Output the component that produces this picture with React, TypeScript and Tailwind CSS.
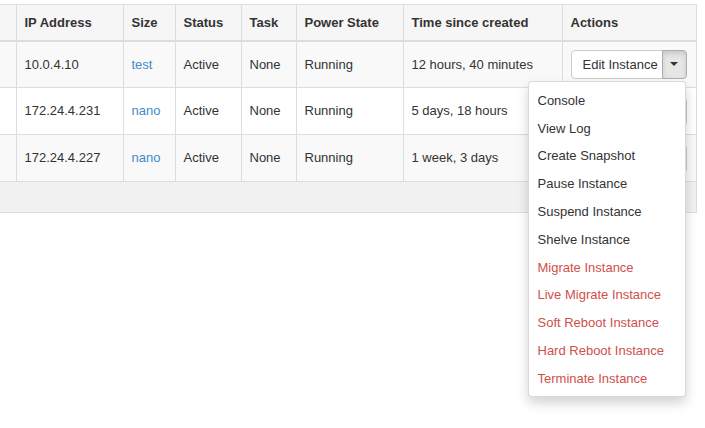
import React from 'react';

type Instance = {
  ip: string;
  size: string;
  status: string;
  task: string;
  power: string;
  age: string;
};

const instances: Instance[] = [
  { ip: '10.0.4.10', size: 'test', status: 'Active', task: 'None', power: 'Running', age: '12 hours, 40 minutes' },
  { ip: '172.24.4.231', size: 'nano', status: 'Active', task: 'None', power: 'Running', age: '5 days, 18 hours' },
  { ip: '172.24.4.227', size: 'nano', status: 'Active', task: 'None', power: 'Running', age: '1 week, 3 days' },
];

const menuItems: { label: string; danger?: boolean }[] = [
  { label: 'Console' },
  { label: 'View Log' },
  { label: 'Create Snapshot' },
  { label: 'Pause Instance' },
  { label: 'Suspend Instance' },
  { label: 'Shelve Instance' },
  { label: 'Migrate Instance', danger: true },
  { label: 'Live Migrate Instance', danger: true },
  { label: 'Soft Reboot Instance', danger: true },
  { label: 'Hard Reboot Instance', danger: true },
  { label: 'Terminate Instance', danger: true },
];

const headers = ['', 'IP Address', 'Size', 'Status', 'Task', 'Power State', 'Time since created', 'Actions'];
const widths = [16, 107, 52, 66, 55, 107, 159, 134];

function ActionButton({ open }: { open?: boolean }) {
  return (
    <div className="relative flex h-[29px] w-[116px]">
      <button className="h-full w-[92px] rounded-l-[4px] border border-[#cccccc] bg-white pl-[11px] text-left text-[13px] text-[#333333]">
        Edit Instance
      </button>
      <button
        className={
          open
            ? '-ml-px flex h-full w-[25px] items-center justify-center rounded-r-[4px] border border-[#adadad] bg-[#e6e6e6] shadow-[inset_0_3px_5px_rgba(0,0,0,0.125)]'
            : '-ml-px flex h-full w-[25px] items-center justify-center rounded-r-[4px] border border-[#cccccc] bg-white'
        }
      >
        <span className="h-0 w-0 border-x-[4px] border-t-[4px] border-x-transparent border-t-[#333333]" />
      </button>
      {open && (
        <ul className="absolute right-[1px] top-[31px] z-10 w-[158px] rounded-[4px] border border-[rgba(0,0,0,0.15)] bg-white pb-[3px] pt-[5px] shadow-[0_6px_12px_rgba(0,0,0,0.175)]">
          {menuItems.map((item) => (
            <li
              key={item.label}
              className={`py-[4px] pl-[9px] text-[13px] leading-[19.8px] ${item.danger ? 'text-[#d0504c]' : 'text-[#333333]'}`}
            >
              {item.label}
            </li>
          ))}
        </ul>
      )}
    </div>
  );
}

export default function App() {
  return (
    <div className="h-[428px] w-[705px] overflow-hidden bg-white pt-[4px] font-['Liberation_Sans',Arial,sans-serif] text-[13px] text-[#333333]">
      <table className="w-[696px] table-fixed border-collapse">
        <colgroup>
          {widths.map((w, i) => (
            <col key={i} style={{ width: w }} />
          ))}
        </colgroup>
        <thead>
          <tr className="h-[36px] bg-[#f6f6f6]">
            {headers.map((h, i) => (
              <th
                key={i}
                className={`border-b-2 border-t border-[#dddddd] px-[8px] text-left font-bold ${i === 0 ? 'border-r' : 'border-x'}`}
              >
                {h}
              </th>
            ))}
          </tr>
        </thead>
        <tbody>
          {instances.map((inst, idx) => (
            <tr key={inst.ip} className={`h-[47px] ${idx % 2 === 0 ? 'bg-[#f9f9f9]' : 'bg-white'}`}>
              <td className="border-b border-r border-[#dddddd]" />
              <td className="border border-[#dddddd] px-[8px]">{inst.ip}</td>
              <td className="border border-[#dddddd] px-[8px] text-[#428bca]">{inst.size}</td>
              <td className="border border-[#dddddd] px-[8px]">{inst.status}</td>
              <td className="border border-[#dddddd] px-[8px]">{inst.task}</td>
              <td className="border border-[#dddddd] px-[8px]">{inst.power}</td>
              <td className="border border-[#dddddd] px-[8px]">{inst.age}</td>
              <td className="border border-[#dddddd] pl-[8px]">
                <ActionButton open={idx === 0} />
              </td>
            </tr>
          ))}
          <tr className="h-[31px] bg-[#f1f1f1]">
            <td colSpan={8} className="border-b border-r border-[#dddddd]" />
          </tr>
        </tbody>
      </table>
    </div>
  );
}
